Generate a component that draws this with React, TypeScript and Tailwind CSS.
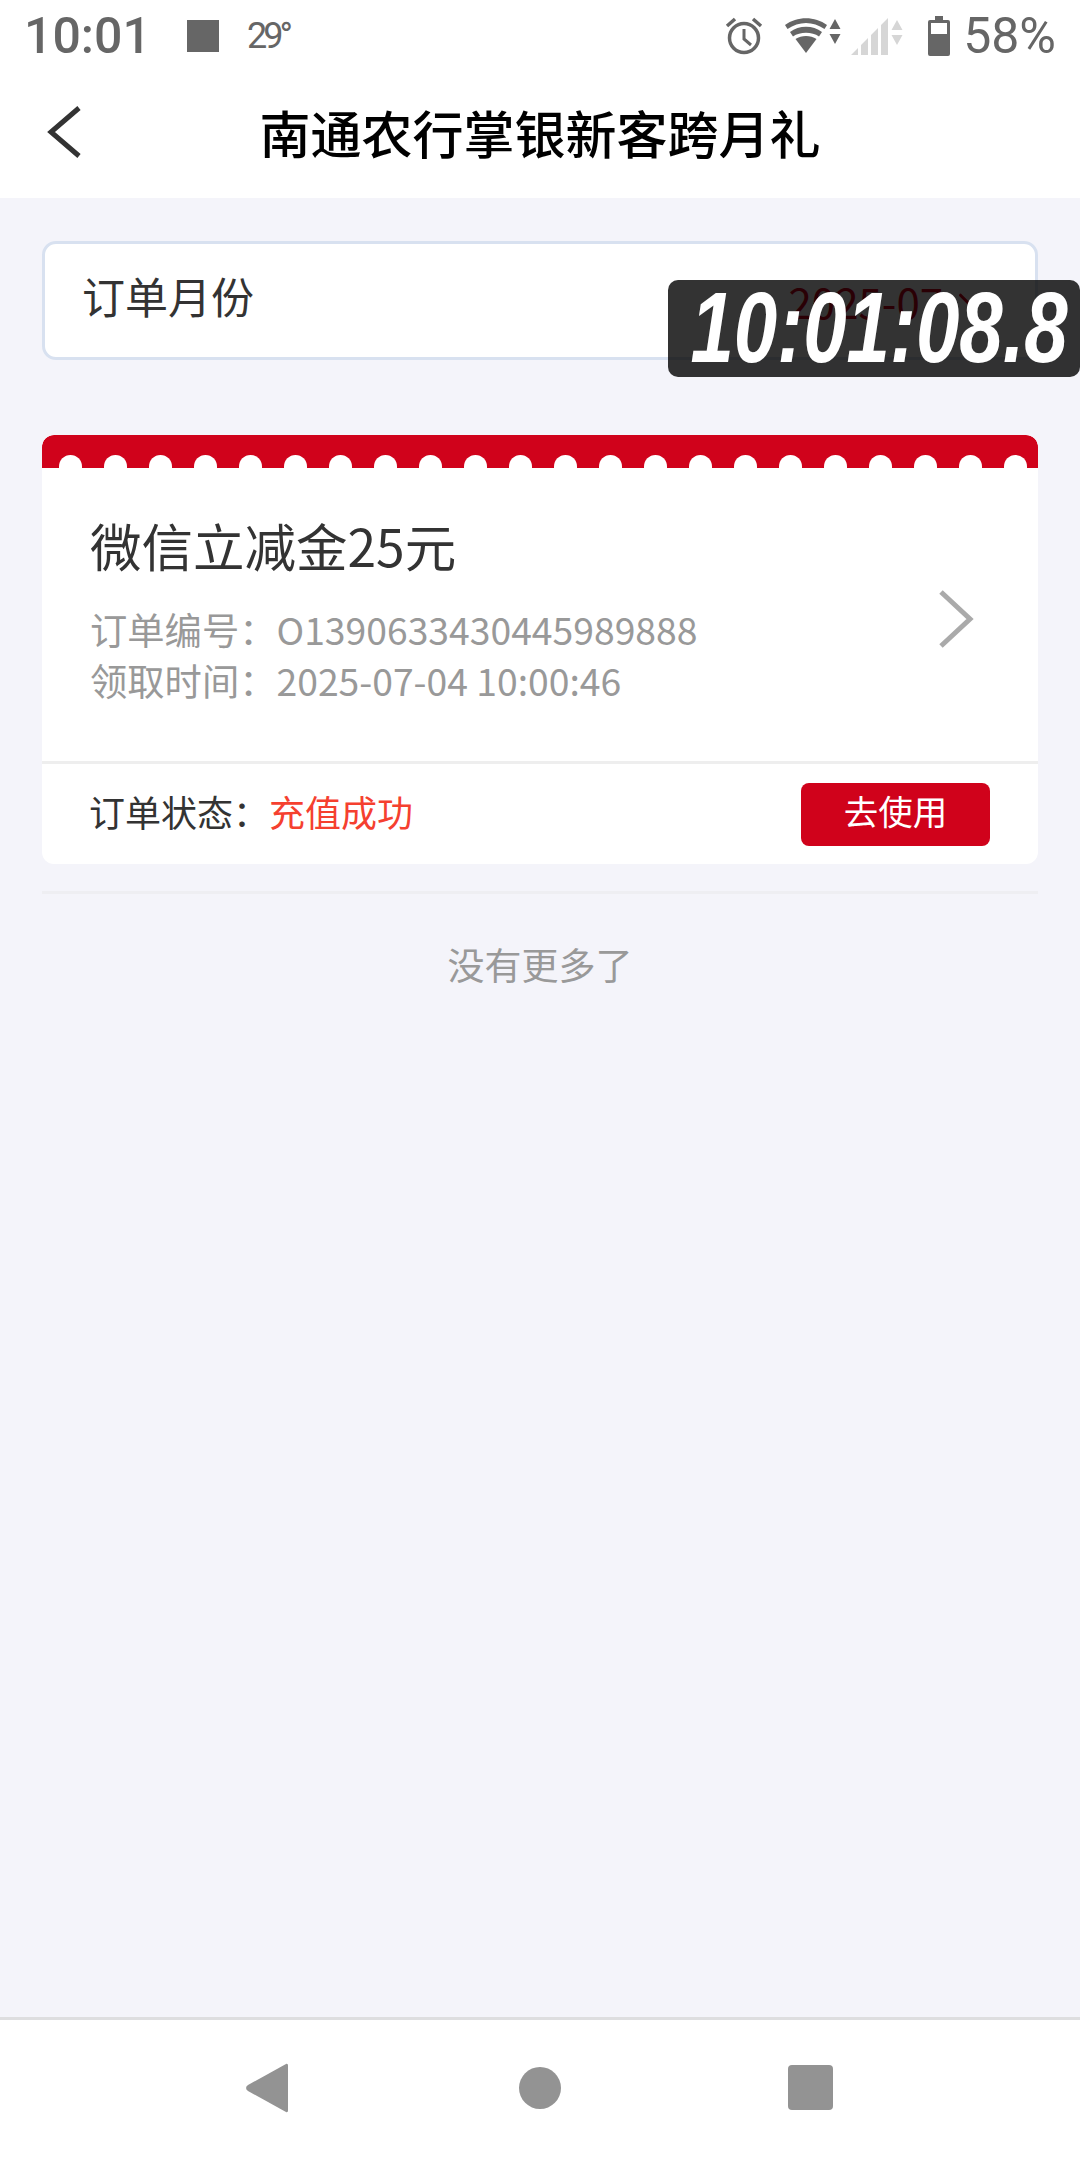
import { ChevronDown } from "lucide-react";

function StatusBar() {
  return (
    <div className="flex h-[72px] items-center pl-[24px] pr-[24px] font-['Roboto',sans-serif] text-[#666666]">
      <span className="w-[163px] text-[50px] font-medium leading-none">10:01</span>
      <div className="h-[32px] w-[32px] bg-[#666666]" />
      <span className="ml-[28px] text-[36px] leading-none tracking-[-4px]">29°</span>
      <div className="flex-1" />
      <svg width="38" height="40" viewBox="0 0 38 40" className="mr-[22px]">
        <circle cx="19" cy="22" r="14.5" fill="none" stroke="#666" strokeWidth="3.5" />
        <path d="M19 13v10l7 6" fill="none" stroke="#666" strokeWidth="3" />
        <path d="M2 10l8-7M36 10l-8-7" stroke="#666" strokeWidth="3.5" />
      </svg>
      <svg width="56" height="36" viewBox="0 0 56 36" className="mr-[10px]">
        <path d="M0 7C12-2 30-2 42 7l-2.500 4C28 3 14 3 2.500 11z" fill="#666" />
        <path d="M5 14c9-7 23-7 32 0l-3 4.500c-7-5-19-5-26 0z" fill="#666" />
        <path d="M10.500 21c6-4 15-4 21 0L21 35z" fill="#666" />
        <path d="M50 1l5.500 10h-11zM50 26l5.500-10h-11z" fill="#666" />
      </svg>
      <svg width="52" height="38" viewBox="0 0 52 38" className="mr-[25px]">
        <path d="M0 38l7-7v7zM10 28l7-7v17h-7zM20 18l7-7v27h-7zM30 8l7-7v37h-7z" fill="#d6d6d6" />
        <path d="M46 3l5.500 10h-11zM46 28l5.500-10h-11z" fill="#d6d6d6" />
      </svg>
      <svg width="22" height="40" viewBox="0 0 22 40" className="mr-[13px]">
        <path d="M7 0h8v4h5a2 2 0 0 1 2 2v32a2 2 0 0 1-2 2H2a2 2 0 0 1-2-2V6a2 2 0 0 1 2-2h5z" fill="#666" />
        <rect x="3" y="7" width="16" height="11" fill="#fff" />
      </svg>
      <span className="text-[50px] leading-none">58%</span>
    </div>
  );
}

function Header() {
  return (
    <div className="grid h-[126px] grid-cols-[120px_1fr_120px] items-center pb-[6px]">
      <svg width="36" height="52" viewBox="0 0 36 52" className="ml-[47px]">
        <path d="M32 2 4 26l28 24" fill="none" stroke="#333" strokeWidth="5" />
      </svg>
      <h1 className="text-center text-[51px] font-medium leading-none text-black">南通农行掌银新客跨月礼</h1>
    </div>
  );
}

function Scallops() {
  return (
    <div className="flex h-[33px] items-end gap-[22px] overflow-hidden rounded-t-[12px] bg-[#d0021b] pl-[17px]">
      {Array.from({ length: 22 }).map((_, i) => (
        <div key={i} className="h-[13px] w-[23px] shrink-0 rounded-t-full bg-white" />
      ))}
    </div>
  );
}

function OrderCard() {
  return (
    <div className="mt-[75px] overflow-hidden rounded-[12px] bg-white">
      <Scallops />
      <div className="flex h-[296px] items-center justify-between border-b-[3px] border-[#eeeeee] pl-[48px] pr-[64px]">
        <div className="pb-[10px]">
          <div className="pt-[6px] text-[51.500px] leading-none text-[#333333]">微信立减金25元</div>
          <div className="mt-[33px] text-[37.300px] leading-[51px] text-[#999999]">
            <div>订单编号：O1390633430445989888</div>
            <div>领取时间：2025-07-04 10:00:46</div>
          </div>
        </div>
        <svg width="36" height="58" viewBox="0 0 36 58" className="mt-[8px]">
          <path d="M3 2 32 29 3 56" fill="none" stroke="#aaaaaa" strokeWidth="5" />
        </svg>
      </div>
      <div className="flex h-[100px] items-center justify-between pl-[47px] pr-[48px]">
        <div className="flex items-center pb-[6px] text-[36px] text-[#333333]">
          <span>订单状态：</span>
          <span className="text-[#f5402f]">充值成功</span>
        </div>
        <button type="button" className="h-[63px] w-[189px] rounded-[8px] bg-[#d0021b] pb-[6px] text-[34.500px] text-white">
          去使用
        </button>
      </div>
    </div>
  );
}

export default function App() {
  return (
    <div className="relative flex h-[2160px] w-[1080px] flex-col overflow-hidden bg-[#f4f4fa] font-['Noto_Sans_CJK_SC','Noto_Sans',sans-serif]">
      <div className="bg-white">
        <StatusBar />
        <Header />
      </div>
      <main className="flex-1 px-[42px] pt-[43px]">
        <div className="flex h-[119px] items-center justify-between rounded-[14px] border-[3px] border-[#d8e1f0] bg-white pl-[37px] pr-[40px]">
          <span className="pb-[10px] text-[43px] text-[#333333]">订单月份</span>
          <span className="flex items-center gap-[6px] text-[42px] text-[#d0021b]">
            2025-07
            <ChevronDown size={46} strokeWidth={1.600} />
          </span>
        </div>
        <OrderCard />
        <div className="mt-[27px] border-t-[3px] border-[#eeeef2] pt-[45px] text-center text-[37px] leading-[50px] text-[#999999]">
          没有更多了
        </div>
      </main>
      <nav className="flex h-[143px] items-center border-t-[3px] border-[#dedee0] bg-white pl-[246px] pb-[5px]">
        <svg width="42" height="50" viewBox="0 0 42 50">
          <path d="M40 1c1.200-.6 2 0 2 2v44c0 2-.8 2.600-2 2L2 28c-2.500-1.500-2.500-4.500 0-6z" fill="#939393" />
        </svg>
        <div className="ml-[231px] h-[42px] w-[42px] rounded-full bg-[#939393]" />
        <div className="ml-[227px] h-[45px] w-[45px] rounded-[4px] bg-[#939393]" />
      </nav>
      <div className="absolute left-[668px] top-[280px] flex h-[97px] w-[412px] items-center justify-end overflow-hidden rounded-[10px] bg-black/80 pb-[4px] pr-[12px]">
        <span className="origin-right scale-x-[0.78] font-['Liberation_Sans',sans-serif] text-[100px] font-bold italic leading-none text-white">
          10:01:08.8
        </span>
      </div>
    </div>
  );
}
